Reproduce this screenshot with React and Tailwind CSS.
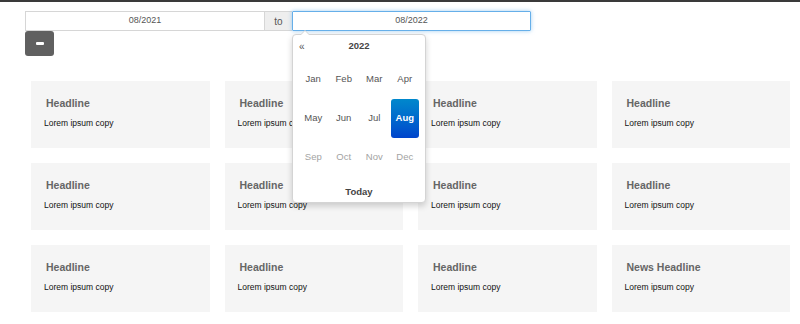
const months = ["Jan", "Feb", "Mar", "Apr", "May", "Jun", "Jul", "Aug", "Sep", "Oct", "Nov", "Dec"];

const cards = [
  "Headline", "Headline", "Headline", "Headline",
  "Headline", "Headline", "Headline", "Headline",
  "Headline", "Headline", "Headline", "News Headline",
];

const MonthPicker = () => (
  <div className="absolute left-0 top-[23px] w-[134px] h-[169px] bg-white border border-[#d4d4d4] rounded-[4px] shadow-[0_3px_6px_rgba(0,0,0,0.18)] z-10">
    {/* caret */}
    <div className="absolute -top-[5px] left-[7px] w-0 h-0 border-l-[5px] border-r-[5px] border-b-[5px] border-l-transparent border-r-transparent border-b-[#d4d4d4]" />
    <div className="absolute -top-[4px] left-[8px] w-0 h-0 border-l-[4px] border-r-[4px] border-b-[4px] border-l-transparent border-r-transparent border-b-white" />
    <div className="flex items-center h-[22px] px-[6px] pt-[1px]">
      <span className="w-[14px] text-[10px] text-[#555]">«</span>
      <span className="flex-1 text-center text-[9.5px] font-bold text-[#444] pr-[14px]">2022</span>
    </div>
    <div className="grid grid-cols-4 px-[5px] mt-[3px]">
      {months.map((m, i) => (
        <div
          key={m}
          className={
            i === 7
              ? "h-[39px] mx-[1px] flex items-center justify-center rounded-[3px] bg-gradient-to-b from-[#0088cc] to-[#0044cc] text-white text-[9.5px] font-bold"
              : "h-[39px] flex items-center justify-center text-[9.5px] " + (i > 7 ? "text-[#a3a3a3]" : "text-[#555]")
          }
        >
          {m}
        </div>
      ))}
    </div>
    <div className="text-center text-[9.5px] font-bold text-[#444] mt-[8px]">Today</div>
  </div>
);

const App = () => {
  return (
    <div className="w-[800px] h-[324px] bg-white overflow-hidden font-['Liberation_Sans',Arial,sans-serif] border-t-2 border-[#3a3a3a]">
      {/* date range */}
      <div className="pl-[25px] pt-[9px]">
        <div className="flex h-[20px]">
          <div className="w-[240px] h-full border border-[#d6d6d6] flex items-center justify-center text-[9px] text-[#555]">
            08/2021
          </div>
          <div className="w-[27px] h-full bg-[#eeeeee] border-y border-[#d6d6d6] flex items-center justify-center text-[10px] text-[#555]">
            to
          </div>
          <div className="relative">
            <div className="w-[239px] h-[20px] border border-[#66afe9] shadow-[0_0_4px_rgba(102,175,233,0.6)] flex items-center justify-center text-[9px] text-[#555] rounded-[1px]">
              08/2022
            </div>
            <MonthPicker />
          </div>
        </div>
        <button className="w-[29px] h-[25px] bg-[#606060] rounded-[3px] flex items-center justify-center">
          <span className="block w-[8px] h-[3px] bg-white rounded-[1px]" />
        </button>
      </div>

      {/* cards */}
      <div className="grid grid-cols-4 gap-x-[15px] gap-y-[15px] pl-[31px] pr-[10px] mt-[25px]">
        {cards.map((h, i) => (
          <div key={i} className="h-[67px] bg-[#f5f5f5] pt-[15px] pl-[13px]">
            <div className="text-[10.5px] font-bold text-[#666] pl-[2px] leading-[14px]">{h}</div>
            <div className="text-[8.5px] text-[#111] mt-[7px] leading-[12px]">Lorem ipsum copy</div>
          </div>
        ))}
      </div>
    </div>
  );
};

export default App;
